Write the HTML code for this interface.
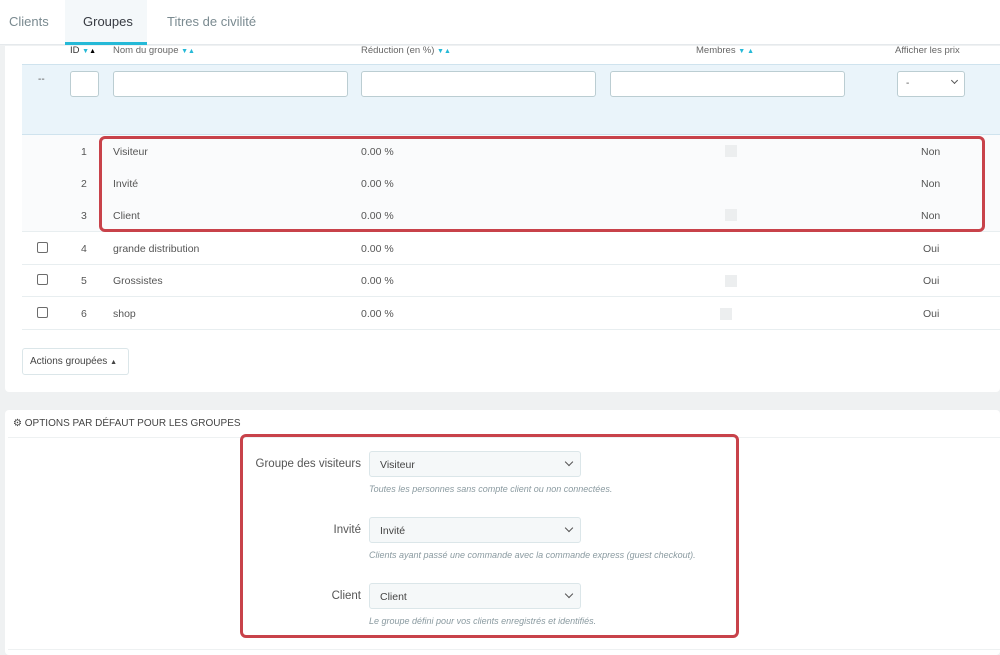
<!DOCTYPE html>
<html><head><meta charset="utf-8"><style>
*{box-sizing:border-box;margin:0;padding:0}
body{width:1000px;height:655px;overflow:hidden;background:#eff1f2;font-family:"Liberation Sans",sans-serif;color:#555;font-size:10.5px;position:relative}
.abs{position:absolute}
.tabs{left:0;top:0;width:1000px;height:45px;background:#fff;border-bottom:1px solid #e5e9ec}
.tab{position:absolute;top:14px;font-size:13px;color:#7a8a90}
.panel{background:#fff;border-radius:0 0 4px 4px}
.inp{position:absolute;background:#fff;border:1px solid #bbcdd2;border-radius:3px;height:26px}
.row{position:absolute;left:22px;width:978px;height:33px;border-bottom:1px solid #e8eef0}
.row span{position:absolute;top:11px}
.cb{position:absolute;left:15px;top:10px;width:11px;height:11px;border:1.5px solid #6c6c6c;border-radius:2px}
.red{position:absolute;border:3px solid #c8424a;border-radius:6px}
.sel{position:absolute;left:369px;width:212px;height:26px;background:#f5f8f9;border:1px solid #dbe6e9;border-radius:3px;font-size:10.5px;padding:7px 10px;color:#444}
.sel:after{content:"";position:absolute;right:8px;top:7px;width:5px;height:5px;border-right:1.3px solid #555;border-bottom:1.3px solid #555;transform:rotate(45deg)}
.lbl{position:absolute;font-size:11.5px;text-align:right;width:200px;left:161px;color:#555}
.help{position:absolute;left:369px;font-size:9px;font-style:italic;color:#8a9aa0}
.sq{position:absolute;width:12px;height:12px;background:#eceeef}
.ar{color:#25b9d7;font-size:7px}
.hd{position:absolute;top:45px;font-size:9.5px;color:#666;white-space:nowrap}
</style></head><body>
<div class="abs tabs">
<div class="tab" style="left:9px">Clients</div>
<div class="abs" style="left:65px;top:0;width:82px;height:45px;background:#f4f8fa;border-bottom:3px solid #25b9d7"></div>
<div class="tab" style="left:83px;color:#363a41">Groupes</div>
<div class="tab" style="left:167px">Titres de civilité</div>
</div>
<div class="abs panel" style="left:5px;top:46px;width:995px;height:346px"></div>
<div class="hd" style="left:70px;color:#333">ID <span class="ar">▼</span><span style="font-size:7px;color:#000">▲</span></div>
<div class="hd" style="left:113px">Nom du groupe <span class="ar">▼▲</span></div>
<div class="hd" style="left:361px">Réduction (en %) <span class="ar">▼▲</span></div>
<div class="hd" style="left:696px">Membres <span class="ar">▼ ▲</span></div>
<div class="hd" style="left:895px">Afficher les prix</div>
<div class="abs" style="left:22px;top:64px;width:978px;height:71px;background:#eaf4fa;border-top:1px solid #cfe3ee;border-bottom:1px solid #cfe3ee"></div>
<div class="abs" style="left:38px;top:74px;font-size:10px">--</div>
<div class="inp" style="left:70px;top:71px;width:29px"></div>
<div class="inp" style="left:113px;top:71px;width:235px"></div>
<div class="inp" style="left:361px;top:71px;width:235px"></div>
<div class="inp" style="left:610px;top:71px;width:235px"></div>
<div class="inp" style="left:897px;top:71px;width:68px;font-size:10px;padding:6px 8px">-<span style="position:absolute;right:7px;top:6px;width:5px;height:5px;border-right:1.3px solid #555;border-bottom:1.3px solid #555;transform:rotate(45deg)"></span></div>

<div class="row" style="top:135px;background:#fafbfc"><span style="left:59px">1</span><span style="left:91px">Visiteur</span><span style="left:339px">0.00 %</span><span style="left:899px">Non</span></div>
<div class="row" style="top:167px;background:#fafbfc"><span style="left:59px">2</span><span style="left:91px">Invité</span><span style="left:339px">0.00 %</span><span style="left:899px">Non</span></div>
<div class="row" style="top:199px;background:#fafbfc"><span style="left:59px">3</span><span style="left:91px">Client</span><span style="left:339px">0.00 %</span><span style="left:899px">Non</span></div>
<div class="row" style="top:232px"><i class="cb"></i><span style="left:59px">4</span><span style="left:91px">grande distribution</span><span style="left:339px">0.00 %</span><span style="left:901px">Oui</span></div>
<div class="row" style="top:264px"><i class="cb"></i><span style="left:59px">5</span><span style="left:91px">Grossistes</span><span style="left:339px">0.00 %</span><span style="left:901px">Oui</span></div>
<div class="row" style="top:297px"><i class="cb"></i><span style="left:59px">6</span><span style="left:91px">shop</span><span style="left:339px">0.00 %</span><span style="left:901px">Oui</span></div>
<div class="sq" style="left:725px;top:145px"></div><div class="sq" style="left:725px;top:209px"></div><div class="sq" style="left:725px;top:275px"></div><div class="sq" style="left:720px;top:308px"></div>
<div class="red" style="left:99px;top:136px;width:886px;height:96px"></div>

<div class="abs" style="left:22px;top:348px;width:107px;height:27px;border:1px solid #dbe6e9;border-radius:3px;background:#fff;font-size:10px;padding:7px 7px;white-space:nowrap;color:#444">Actions groupées <span style="font-size:7px">▲</span></div>

<div class="abs panel" style="left:5px;top:410px;width:995px;height:245px;border-radius:4px"></div>
<div class="abs" style="left:13px;top:418px;font-size:10px;color:#444;white-space:nowrap">⚙ OPTIONS PAR DÉFAUT POUR LES GROUPES</div>
<div class="abs" style="left:8px;top:437px;width:992px;height:1px;background:#eef1f2"></div>
<div class="lbl" style="top:458px">Groupe des visiteurs</div>
<div class="sel" style="top:451px">Visiteur</div>
<div class="help" style="top:484px">Toutes les personnes sans compte client ou non connectées.</div>
<div class="lbl" style="top:524px">Invité</div>
<div class="sel" style="top:517px">Invité</div>
<div class="help" style="top:550px">Clients ayant passé une commande avec la commande express (guest checkout).</div>
<div class="lbl" style="top:590px">Client</div>
<div class="sel" style="top:583px">Client</div>
<div class="help" style="top:616px">Le groupe défini pour vos clients enregistrés et identifiés.</div>
<div class="abs" style="left:8px;top:649px;width:992px;height:1px;background:#eef1f2"></div>
<div class="red" style="left:240px;top:434px;width:499px;height:204px"></div>
</body></html>
